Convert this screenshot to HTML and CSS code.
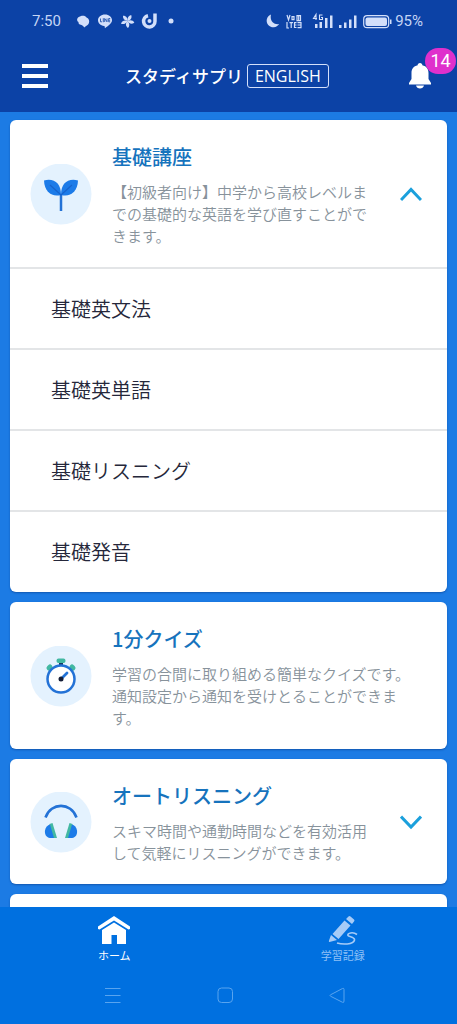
FILE: index.html
```html
<!DOCTYPE html>
<html lang="ja">
<head>
<meta charset="utf-8">
<meta name="viewport" content="width=device-width, initial-scale=1">
<title>スタディサプリ ENGLISH</title>
<link rel="stylesheet" href="styles.css">
</head>
<body>
<div class="app">
  <header class="header">
    <div class="status">
      <div class="status-group">
        <span class="clock">7:50</span>
        <svg width="98" height="18" viewBox="0 0 98 18" fill="#d3dffa" aria-hidden="true">
          <path d="M4.500 1.200C7 .2 9.500 .8 10.500 2.500C13 3.500 14 6.500 12.500 9C11.500 10.500 9.500 11 8.500 12.500C7.500 11.500 7 10.800 5.500 10C3 9.500 2.300 8.500 2.500 7C0 5.500 1 2 4.500 1.200Z" transform="translate(0 3)"/>
          <path d="M29 2.500c4 0 7 2.500 7 5.700 0 3.400-4 5.500-7 8-.5-1.300.2-1.900-1-2.300-3.500-.5-6-2.800-6-5.700 0-3.200 3-5.700 7-5.700Z"/>
          <g fill="none" stroke="#0c42a6" stroke-width=".8"><path d="M24.500 6.500v3.300H26M27.300 6.200V10.200M28.700 10V6.500L31 9.800V6.500M34.200 6.500h-1.500v3.300h1.500M32.700 8.200h1.500"/></g>
          <g transform="translate(51.500 9)"><path id="blade" d="M0 0C-2.300-2.500-2.300-5-.5-7C2.300-5 2-2 0 0Z" transform="rotate(36)"/><use href="#blade" transform="rotate(72)"/><use href="#blade" transform="rotate(144)"/><use href="#blade" transform="rotate(216)"/><use href="#blade" transform="rotate(288)"/></g>
          <path d="M72 3.700A5.700 5.700 0 1 0 79 9.200V1.500" fill="none" stroke="#d3dffa" stroke-width="3.500"/>
          <circle cx="73.500" cy="9" r="2"/>
          <circle cx="95" cy="9" r="2.500"/>
        </svg>
      </div>
      <div class="status-group status-right">
        <svg width="126" height="18" viewBox="0 0 126 18" fill="#d3dffa" aria-hidden="true">
          <path d="M5 2.500A6.600 6.600 0 1 0 13 12C8 13 3.500 9 5 2.500Z"/>
          <g fill="none" stroke="#d3dffa" stroke-width="1.200"><path d="M21 3l1.500 5L24 3M26 4.700h2v3h-2ZM21 10v6h2M23.500 10.600H27M25.200 10.600V16M30.500 10.600H28.500V15.500H30.500M28.500 13H30.500"/><path d="M31 3.600h3.500v5H31ZM32.700 3v6M31.500 10.600h3.500v5h-3.500M31.500 13H35"/></g>
          <g fill="none" stroke="#d3dffa" stroke-width="1.100"><path d="M50 8V2.500L47.500 6.500H51M56.500 3H53.500V7.500H56.500V5.500H55"/></g>
          <path d="M49 12h2.500v4H49ZM53.500 10H56v6H53.500ZM59 6h2.500v10H59ZM64 3.500h2.500V16H64ZM73 13h2.500v3H73ZM78 10.500h2.500V16H78ZM83 7.500h2.500V16H83ZM88 3.500h2.500V16H88Z"/>
          <rect x="97.700" y="3.700" width="25" height="12" rx="3.500" fill="none" stroke="#d3dffa" stroke-width="1.200"/>
          <rect x="99.500" y="5.500" width="21.500" height="8.500" rx="2"/><path d="M124 7.500h1.500v4.500H124Z"/>
        </svg>
        <span class="battery">95%</span>
      </div>
    </div>
    <div class="bar">
      <button class="icon-button" type="button" aria-label="メニュー">
        <svg width="26" height="26" viewBox="0 0 26 26" fill="#fff"><path d="M0 1h26v4H0ZM0 11h26v4H0ZM0 21h26v4H0Z"/></svg>
      </button>
      <h1 class="logo"><span>スタディサプリ</span><span class="logo-box">ENGLISH</span></h1>
      <button class="icon-button bell" type="button" aria-label="お知らせ">
        <svg width="24" height="28" viewBox="0 0 24 28" fill="#fff"><path d="M12 1C10.500 1 9.700 2 9.700 3.200C5.500 4 3.500 7 3.500 11V17L1 21V22.500H23V21L20.500 17V11C20.500 7 18.500 4 14.300 3.200C14.300 2 13.500 1 12 1ZM8 23.500H16C15.500 25.500 14 26.500 12 26.500S8.500 25.500 8 23.500Z"/></svg>
        <span class="badge">14</span>
      </button>
    </div>
  </header>

  <main class="content">
    <section class="card">
      <button class="card-head" type="button" aria-expanded="true">
        <svg class="card-icon" viewBox="0 0 62 62" aria-hidden="true">
          <circle cx="31" cy="30" r="30.500" fill="#e4f2fe"/>
          <path d="M31 47V30" stroke="#2372d6" stroke-width="2.500" fill="none"/>
          <path d="M31 31C22 33.500 14.500 28 14 16.500C24 14 31 19 31 31Z" fill="#1c7be8"/>
          <path d="M31 31C40 33.500 47.500 28 48 16.500C38 14 31 19 31 31Z" fill="#1c7be8"/>
          <path d="M20 21L31 31L42 21" fill="none" stroke="#1763cc" stroke-width="1.200"/>
        </svg>
        <span class="card-text">
          <span class="card-title">基礎講座</span>
          <span class="card-desc">【初級者向け】中学から高校レベルまでの基礎的な英語を学び直すことができます。</span>
        </span>
        <svg class="chevron" viewBox="0 0 22 16" aria-hidden="true"><path d="M1 13L11 2.500L21 13"/></svg>
      </button>
      <ul class="lessons">
        <li><a href="#">基礎英文法</a></li>
        <li><a href="#">基礎英単語</a></li>
        <li><a href="#">基礎リスニング</a></li>
        <li><a href="#">基礎発音</a></li>
      </ul>
    </section>

    <section class="card">
      <button class="card-head" type="button">
        <svg class="card-icon" viewBox="0 0 62 62" aria-hidden="true">
          <circle cx="31" cy="30" r="30.500" fill="#e4f2fe"/>
          <path d="M31 15v5" stroke="#17375e" stroke-width="4"/>
          <rect x="26.500" y="12.500" width="9" height="4.500" rx="2" fill="#42b8a2"/>
          <path d="M19 22l1-1M43 22l-1-1" stroke="#42b8a2" stroke-width="5" stroke-linecap="round"/>
          <circle cx="31" cy="33" r="13.500" fill="#fff" stroke="#2372d6" stroke-width="2.500"/>
          <path d="M31 33L37 27" stroke="#2372d6" stroke-width="2.800" stroke-linecap="round"/>
          <circle cx="31" cy="33" r="2.500" fill="#141c35"/>
        </svg>
        <span class="card-text">
          <span class="card-title">1分クイズ</span>
          <span class="card-desc">学習の合間に取り組める簡単なクイズです。通知設定から通知を受けとることができます。</span>
        </span>
      </button>
    </section>

    <section class="card">
      <button class="card-head" type="button" aria-expanded="false">
        <svg class="card-icon" viewBox="0 0 62 62" aria-hidden="true">
          <circle cx="31" cy="30" r="30.500" fill="#e4f2fe"/>
          <path d="M15.500 25.500C21 10 41 10 46.500 25.500" fill="none" stroke="#2372d6" stroke-width="2.600"/>
          <g id="cup"><path d="M19.500 32L22.500 31L27 46H20Z" fill="#42b8a2"/>
          <path d="M20 32.500L24 46H20C16 45.500 14.500 42 15 38.500C15.500 35 17.500 33 20 32.500Z" fill="#1c7be8"/></g>
          <use href="#cup" transform="translate(62 0) scale(-1 1)"/>
        </svg>
        <span class="card-text">
          <span class="card-title">オートリスニング</span>
          <span class="card-desc">スキマ時間や通勤時間などを有効活用して気軽にリスニングができます。</span>
        </span>
        <svg class="chevron" viewBox="0 0 22 16" aria-hidden="true"><path d="M1 1.500L11 12L21 1.500"/></svg>
      </button>
    </section>

    <section class="card card-next"></section>
  </main>

  <footer class="footer">
    <nav class="tabs">
      <a class="tab" href="#" aria-current="page">
        <svg width="34" height="30" viewBox="0 0 34 30" fill="#fff" aria-hidden="true"><path d="M17 1L33 11.500V14L31.500 14.500L17 5.500L2.500 14.500L1 14V11.500ZM17 7.500L29 15V29H20V20H14.500V29H5V15Z"/></svg>
        <span>ホーム</span>
      </a>
      <a class="tab tab-muted" href="#">
        <svg width="34" height="30" viewBox="0 0 34 30" fill="#a6cbf7" aria-hidden="true"><path d="M22.500 1.500Q23.500 .5 24.500 1.500L28 4.500Q29 5.500 28 6.500L26 9L20 4ZM18.500 5.500L24.500 10.500L12.500 24L6.500 19ZM5 20L11 25L3.500 27Q2.500 27 3 25.500Z"/><path d="M31 19.500C27 16.500 21 18 22 20.500C23 22 29 22 28.500 25C27.500 30 16 29.500 11 28" fill="none" stroke="#a6cbf7" stroke-width="1.600"/></svg>
        <span>学習記録</span>
      </a>
    </nav>
    <div class="system-nav">
      <button class="system-button" type="button" aria-label="アプリ履歴"><svg width="18" height="18" viewBox="0 0 18 18"><path d="M1 2.500H16.500M1 9.500H16.500M1 16.500H16.500"/></svg></button>
      <button class="system-button" type="button" aria-label="ホーム画面"><svg width="18" height="18" viewBox="0 0 18 18"><rect x="2" y="2" width="14.500" height="14.500" rx="3.500"/></svg></button>
      <button class="system-button" type="button" aria-label="戻る"><svg width="18" height="18" viewBox="0 0 18 18"><path d="M14.500 2.500Q16 1.800 16 3.500V15Q16 17 14.500 16.300L2.500 10.200Q1.500 9.500 2.500 8.800Z"/></svg></button>
    </div>
  </footer>
</div>
</body>
</html>
```
FILE: styles.css
```css
* {
  box-sizing: border-box;
}

body {
  margin: 0;
  background: #1c7be4;
  font-family: "Noto Sans CJK JP", sans-serif;
}

button {
  margin: 0;
  padding: 0;
  border: 0;
  background: none;
  color: inherit;
  font: inherit;
  text-align: left;
}

a {
  color: inherit;
  text-decoration: none;
}

svg {
  display: block;
  flex: none;
}

.app {
  display: flex;
  flex-direction: column;
  height: 100vh;
}

.header {
  flex: none;
  background: #0c42a6;
  color: #fff;
}

.status {
  display: flex;
  align-items: center;
  justify-content: space-between;
  height: 40px;
  padding: 2px 34px 0 32px;
  color: #c5d5f5;
  font: 15px/18px Roboto, sans-serif;
}

.status-group {
  display: flex;
  align-items: center;
  gap: 15px;
}

.status-right {
  gap: 3px;
}

.bar {
  display: grid;
  grid-template-columns: 1fr auto 1fr;
  align-items: center;
  height: 72px;
  padding: 0 25px 0 22px;
}

.icon-button {
  position: relative;
  justify-self: start;
}

.bell {
  justify-self: end;
}

.badge {
  position: absolute;
  top: -14px;
  left: 17px;
  min-width: 31px;
  padding: 0 5px;
  border-radius: 13px;
  background: #df30cc;
  font: 18px/26px Roboto, sans-serif;
  text-align: center;
}

.logo {
  display: flex;
  align-items: center;
  gap: 4px;
  margin: 0;
  font-size: 17px;
  font-weight: 500;
  line-height: 24px;
}

.logo-box {
  padding: 0 7px;
  border: 1px solid #d3dffa;
  border-radius: 3px;
  font: 16px/22px "Open Sans", sans-serif;
}

.content {
  display: flex;
  flex: 1;
  flex-direction: column;
  gap: 10px;
  min-height: 0;
  padding: 8px 10px 0;
  overflow: hidden;
}

.card {
  flex: none;
  border-radius: 6px;
  background: #fff;
  box-shadow: 0 1px 2px #1257b0;
}

.card-next {
  height: 125px;
}

.card-head {
  display: flex;
  align-items: center;
  gap: 20px;
  width: 100%;
  padding: 23px 25px 20px 20px;
}

.card-icon {
  width: 62px;
  height: 62px;
}

.card-text {
  display: flex;
  flex: 1;
  flex-direction: column;
  gap: 10px;
  min-width: 0;
}

.card-title {
  color: #1673bd;
  font-size: 20px;
  font-weight: 500;
  line-height: 28px;
}

.card-desc {
  color: #87929b;
  font-size: 15px;
  font-weight: 350;
  line-height: 22px;
}

.chevron {
  width: 22px;
  height: 16px;
  fill: none;
  stroke: #1ba0dc;
  stroke-width: 3;
}

.lessons {
  margin: 0;
  padding: 0 0 1px;
  list-style: none;
}

.lessons a {
  display: block;
  padding: 26px 41px;
  border-top: 2px solid #e3e5e7;
  color: #25273a;
  font-size: 20px;
  font-weight: 350;
  line-height: 27px;
}

.footer {
  flex: none;
  background: #0070e0;
}

.tabs {
  display: grid;
  grid-template-columns: 1fr 1fr;
  padding-top: 8px;
}

.tab {
  display: flex;
  flex-direction: column;
  align-items: center;
  gap: 2px;
  color: #fff;
  font-size: 11px;
  line-height: 16px;
}

.tab-muted {
  color: #8fc0f6;
}

.system-nav {
  display: grid;
  grid-template-columns: 1fr 1fr 1fr;
  justify-items: center;
  padding: 23px 64px 20px 57px;
}

.system-button svg {
  fill: none;
  stroke: #59a4ef;
  stroke-width: 1;
}
```
